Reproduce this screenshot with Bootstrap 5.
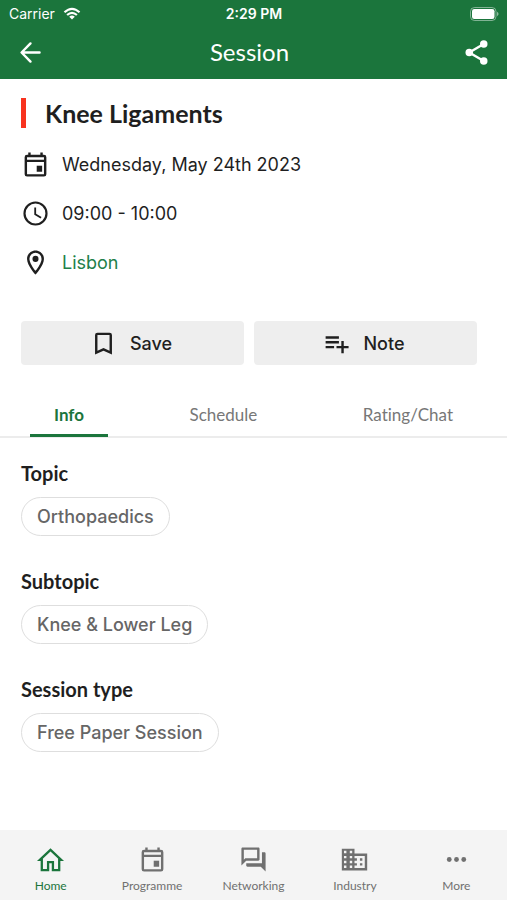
<!DOCTYPE html>
<html lang="en">
<head>
<meta charset="utf-8">
<meta name="viewport" content="width=device-width, initial-scale=1">
<title>Session</title>
<link href="https://cdn.jsdelivr.net/npm/bootstrap@5.3.0/dist/css/bootstrap.min.css" rel="stylesheet">
<style>
:root { --brand: #1b753c; --ink: #1f1f1f; --muted-ink: #666; }
body { font-family: Inter, "Liberation Sans", sans-serif; color: var(--ink); background: #fff; font-size: 18px; line-height: 24px; }
svg { display: block; fill: currentColor; flex-shrink: 0; }
.humanist { font-family: Lato, "Open Sans", sans-serif; font-variant-ligatures: none; }
.brand-bar { background: var(--brand); color: #fff; }
.status { font-size: 14px; line-height: 28px; padding: 0 8px 0 9px; }
.clock-time { font-weight: 600; }
.title-row { height: 51px; padding: 0 16px 3px; }
.title-row h1 { font-size: 24px; line-height: 48px; font-weight: 400; padding-right: 8px; }
.icon-button { color: inherit; border: 0; background: none; padding: 0; }
.page-body { padding: 19px 30px 0 21px; }
.session-name { font-size: 25px; line-height: 30px; font-weight: 700; border-left: 5px solid #f8331f; padding-left: 19px; margin-bottom: 22px; }
.facts { gap: 20px; margin-bottom: 44px; }
.facts li { gap: 12px; line-height: 29px; }
.green-link { color: #218049; text-decoration: none; }
.actions { gap: 10px; }
.action-button { background: #eee; color: var(--ink); border: 0; border-radius: 4px; height: 44px; font-size: 18px; font-weight: 500; gap: 12px; padding: 0 4px 0 0; }
.action-button:hover { background: #e4e4e4; }
.tab-strip { margin-top: 28px; padding: 0 30px; border-bottom: 2px solid #ececec; }
.tab-strip .nav-link { font-size: 17px; line-height: 24px; padding: 10px 24px 7px; color: #777; border-radius: 0; border-bottom: 3px solid transparent; margin-bottom: -1px; }
.tab-strip .nav-link.active { color: var(--brand); font-weight: 700; border-bottom-color: var(--brand); }
.detail-list { padding: 22px 21px 32px; gap: 32px; }
.detail-list h2 { font-size: 20px; line-height: 26px; font-weight: 700; margin-bottom: 11px; }
.pill { display: inline-block; border: 1px solid #dedede; border-radius: 20px; line-height: 37px; padding: 0 15px; color: var(--muted-ink); font-weight: 500; }
.bottom-bar { background: #f4f4f4; height: 70px; }
.bottom-bar a { color: #707070; font-size: 12px; line-height: 16px; text-decoration: none; padding-top: 15px; gap: 4px; }
.bottom-bar a.current { color: var(--brand); }
</style>
<script src="https://cdn.jsdelivr.net/npm/bootstrap@5.3.0/dist/js/bootstrap.bundle.min.js"></script>
</head>
<body class="d-flex flex-column min-vh-100">
<svg width="0" height="0" class="d-none" aria-hidden="true">
  <symbol id="calendar" viewBox="0 0 24 24"><path d="M19 4h-1V2h-2v2H8V2H6v2H5a2 2 0 0 0-2 2v14a2 2 0 0 0 2 2h14a2 2 0 0 0 2-2V6a2 2 0 0 0-2-2zm0 16H5V10h14v10zm0-12H5V6h14v2z"/><path d="M13 13h4.500v5H13z"/></symbol>
</svg>
<header class="brand-bar">
  <div class="status row g-0 align-items-center">
    <div class="col d-flex align-items-center gap-2">Carrier
      <svg width="18" height="14" viewBox="0 0 20 16" role="img" aria-label="Wi-Fi"><g fill="none" stroke="#fff" stroke-width="2.500"><path d="M1.400 6Q10-1.900 18.600 6"/><path d="M4.400 9.100q5.600-5 11.200 0"/></g><path d="M6.800 11.200q3.200-2.800 6.400 0L10 14.400z"/></svg>
    </div>
    <div class="col-auto clock-time">2:29 PM</div>
    <div class="col d-flex justify-content-end">
      <svg width="29" height="14" viewBox="0 0 29 14" role="img" aria-label="Battery full"><rect x=".5" y=".5" width="25.500" height="13" rx="4" fill="none" stroke="#fff" opacity=".45"/><rect x="2" y="2" width="22.500" height="10" rx="2.300"/><path opacity=".5" d="M27 4.800q3.200 2.200 0 4.400z"/></svg>
    </div>
  </div>
  <div class="title-row row g-0 align-items-center">
    <div class="col d-flex"><button class="icon-button" type="button" aria-label="Back"><svg width="29" height="29" viewBox="0 0 24 24"><path fill="none" stroke="#fff" stroke-width="2" stroke-linecap="round" stroke-linejoin="round" d="M19.500 12H5M12 4.500 4.600 12l7.400 7.500"/></svg></button></div>
    <h1 class="col-auto humanist mb-0">Session</h1>
    <div class="col d-flex justify-content-end"><button class="icon-button" type="button" aria-label="Share"><svg width="29" height="29" viewBox="0 0 24 24"><path fill="none" stroke="#fff" stroke-width="2" d="M18 5 6 12l12 7"/><circle cx="18" cy="5" r="3.100"/><circle cx="6" cy="12" r="3.100"/><circle cx="18" cy="19" r="3.100"/></svg></button></div>
  </div>
</header>
<main class="flex-grow-1">
  <section class="page-body">
    <h2 class="session-name humanist">Knee Ligaments</h2>
    <ul class="facts list-unstyled d-flex flex-column">
      <li class="d-flex"><svg width="29" height="29"><use href="#calendar"/></svg>Wednesday, May 24th 2023</li>
      <li class="d-flex"><svg width="29" height="29" viewBox="0 0 24 24"><circle cx="12" cy="12" r="9.100" fill="none" stroke="currentColor" stroke-width="1.800"/><path d="M11 7h1.500v5.200l4.500 2.700-.8 1.200L11 13z"/></svg>09:00 - 10:00</li>
      <li class="d-flex"><svg width="29" height="29" viewBox="0 0 24 24"><path d="M12 2C8.130 2 5 5.130 5 9c0 5.250 7 13 7 13s7-7.750 7-13c0-3.870-3.130-7-7-7zM7 9a5 5 0 0 1 10 0c0 2.880-2.880 7.190-5 9.880C9.920 16.210 7 11.850 7 9z"/><circle cx="12" cy="9" r="2.500"/></svg><a href="#" class="green-link">Lisbon</a></li>
    </ul>
    <div class="actions d-flex">
      <button type="button" class="action-button btn flex-fill w-50 d-flex align-items-center justify-content-center"><svg width="29" height="29" viewBox="0 0 24 24"><path d="M17 3H7a2 2 0 0 0-2 2v16l7-3 7 3V5a2 2 0 0 0-2-2zm0 15-5-2.180L7 18V5h10v13z"/></svg>Save</button>
      <button type="button" class="action-button btn flex-fill w-50 d-flex align-items-center justify-content-center"><svg width="29" height="29" viewBox="0 0 24 24"><path d="M14 10H3v2h11v-2zm0-4H3v2h11V6zm4 8v-4h-2v4h-4v2h4v4h2v-4h4v-2h-4zM3 16h7v-2H3v2z"/></svg>Note</button>
    </div>
  </section>
  <nav class="tab-strip nav justify-content-between humanist" aria-label="Session sections">
    <a class="nav-link active" aria-current="page" href="#">Info</a>
    <a class="nav-link" href="#">Schedule</a>
    <a class="nav-link" href="#">Rating/Chat</a>
  </nav>
  <section class="detail-list d-flex flex-column">
    <div><h2 class="humanist">Topic</h2><span class="pill">Orthopaedics</span></div>
    <div><h2 class="humanist">Subtopic</h2><span class="pill">Knee &amp; Lower Leg</span></div>
    <div><h2 class="humanist">Session type</h2><span class="pill">Free Paper Session</span></div>
  </section>
</main>
<nav class="bottom-bar row g-0 humanist sticky-bottom" aria-label="Main">
  <a href="#" class="current col d-flex flex-column align-items-center" aria-current="page"><svg width="29" height="29" viewBox="0 0 24 24"><path fill="none" stroke="currentColor" stroke-width="1.900" d="M3.200 12.300 12 4l8.800 8.300h-1.600V20.800H14v-6.600h-4v6.600H4.800v-8.500z"/></svg>Home</a>
  <a href="#" class="col d-flex flex-column align-items-center"><svg width="29" height="29"><use href="#calendar"/></svg>Programme</a>
  <a href="#" class="col d-flex flex-column align-items-center"><svg width="29" height="29" viewBox="0 0 24 24"><path d="M15 4v7H5.170L4 12.170V4h11m1-2H3c-.55 0-1 .45-1 1v14l4-4h10c.55 0 1-.45 1-1V3c0-.55-.45-1-1-1zm5 4h-2v9H6v2c0 .55.45 1 1 1h11l4 4V7c0-.55-.45-1-1-1z"/></svg>Networking</a>
  <a href="#" class="col d-flex flex-column align-items-center"><svg width="29" height="29" viewBox="0 0 24 24"><path fill-rule="evenodd" d="M1.500 3H12v4h10.500v14h-21zM3.300 4.800v2h2v-2zm4.800 0v2h2v-2zM3.300 9v2h2V9zm4.800 0v2h2V9zm-4.800 4v2h2v-2zm4.800 0v2h2v-2zm-4.800 4v2h2v-2zm4.800 0v2h2v-2zM12 9v2h2v2h-2v2h2v2h-2v2h8.500V9z"/><path d="M16.500 11h2v2h-2zM16.500 15h2v2h-2z"/></svg>Industry</a>
  <a href="#" class="col d-flex flex-column align-items-center"><svg width="29" height="29" viewBox="0 0 24 24"><circle cx="6" cy="12" r="2"/><circle cx="12" cy="12" r="2"/><circle cx="18" cy="12" r="2"/></svg>More</a>
</nav>
</body>
</html>
